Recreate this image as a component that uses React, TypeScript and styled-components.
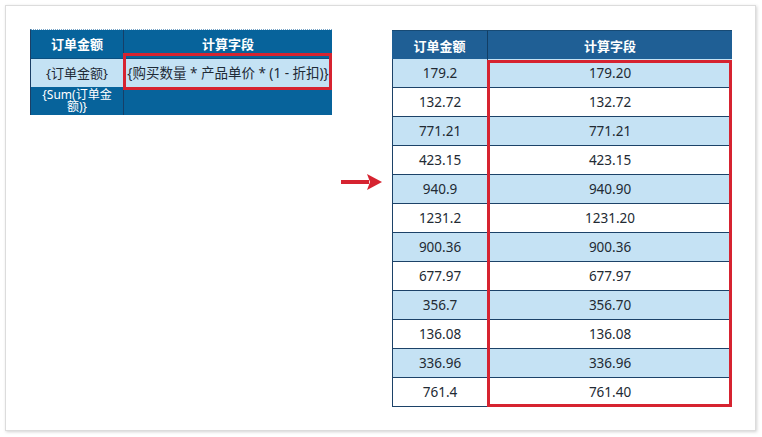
import React from "react";
import styled, { createGlobalStyle } from "styled-components";

const Global = createGlobalStyle`
  html, body { margin: 0; padding: 0; background: #ffffff; }
  body { font-family: "Noto Sans", "Noto Sans CJK SC", sans-serif; }
`;

const Page = styled.div`
  width: 762px;
  height: 437px;
  padding: 5px 0 0 5px;
  box-sizing: border-box;
`;

const Card = styled.div`
  width: 751px;
  height: 426px;
  box-sizing: border-box;
  border: 1px solid #dcdcdc;
  box-shadow: 1px 1px 3px rgba(0, 0, 0, 0.18);
  background: #ffffff;
  padding: 23px 0 0 24px;
  display: flex;
  align-items: flex-start;
`;

const Template = styled.div`
  position: relative;
  width: 302px;
  box-sizing: border-box;
  display: grid;
  grid-template-columns: 93px 1fr;
  grid-template-rows: 29px 28px 28px;
  border-top: 1px dotted #7aa6c8;
  border-left: 1px solid #1b3f66;
`;

const TCell = styled.div<{ $kind: "head" | "data" | "foot"; $divider?: boolean; $wide?: boolean }>`
  display: flex;
  align-items: center;
  justify-content: center;
  text-align: center;
  box-sizing: border-box;
  padding: ${(p) => (p.$wide ? "0" : "0 6px")};
  white-space: ${(p) => (p.$kind === "foot" ? "normal" : "nowrap")};
  overflow: hidden;
  border-right: ${(p) => (p.$divider ? "1px solid #163f68" : "none")};
  background: ${(p) => (p.$kind === "data" ? "#c4e2f4" : "#07639b")};
  color: ${(p) => (p.$kind === "data" ? "#1e2a36" : "#ffffff")};
  font-size: ${(p) => (p.$kind === "foot" ? "12px" : p.$wide ? "13.5px" : "13px")};
  line-height: ${(p) => (p.$kind === "foot" ? "12px" : "16px")};
  font-weight: ${(p) => (p.$kind === "head" ? 700 : 400)};
  border-bottom: ${(p) => (p.$kind === "head" ? "1px solid #0b4f80" : "none")};
`;

const Highlight = styled.div<{ $top: number; $left: number; $w: number; $h: number }>`
  position: absolute;
  top: ${(p) => p.$top}px;
  left: ${(p) => p.$left}px;
  width: ${(p) => p.$w}px;
  height: ${(p) => p.$h}px;
  box-sizing: border-box;
  border: 3px solid #d62330;
  pointer-events: none;
`;

const ArrowSlot = styled.div`
  width: 60px;
  height: 20px;
  margin-top: 143px;
  display: flex;
  align-items: center;
  padding-left: 9px;
  box-sizing: border-box;
`;

const Result = styled.div`
  position: relative;
  margin-top: 1px;
  width: 340px;
  display: grid;
  grid-template-columns: 95px 1fr;
  grid-auto-rows: 29px;
`;

const RHead = styled.div<{ $divider?: boolean }>`
  display: flex;
  align-items: center;
  justify-content: center;
  background: #1f5f95;
  color: #ffffff;
  font-weight: 700;
  font-size: 13px;
  box-sizing: border-box;
  border-top: 1px solid #174a74;
  border-left: ${(p) => (p.$divider ? "1px solid #123e64" : "none")};
`;

const RCell = styled.div<{ $alt: boolean }>`
  display: flex;
  align-items: center;
  justify-content: center;
  background: ${(p) => (p.$alt ? "#c5e2f4" : "#ffffff")};
  color: #222a33;
  font-size: 13.5px;
  box-sizing: border-box;
  border-bottom: 1px solid #1c4268;
  border-left: 1px solid #1c4268;
`;

const rows = [
  ["179.2", "179.20"],
  ["132.72", "132.72"],
  ["771.21", "771.21"],
  ["423.15", "423.15"],
  ["940.9", "940.90"],
  ["1231.2", "1231.20"],
  ["900.36", "900.36"],
  ["677.97", "677.97"],
  ["356.7", "356.70"],
  ["136.08", "136.08"],
  ["336.96", "336.96"],
  ["761.4", "761.40"],
];

export default function App() {
  return (
    <>
      <Global />
      <Page>
        <Card>
          <Template>
            <TCell $kind="head" $divider>订单金额</TCell>
            <TCell $kind="head">计算字段</TCell>
            <TCell $kind="data" $divider>{"{订单金额}"}</TCell>
            <TCell $kind="data" $wide>{"{购买数量 * 产品单价 * (1 - 折扣)}"}</TCell>
            <TCell $kind="foot" $divider>{"{Sum(订单金额)}"}</TCell>
            <TCell $kind="foot"></TCell>
            <Highlight $top={23} $left={92} $w={209} $h={37} />
          </Template>
          <ArrowSlot>
            <svg width="42" height="18" viewBox="0 0 42 18">
              <rect x="0" y="7" width="28" height="4" fill="#d62330" />
              <polygon points="26,1 41,9 26,17 29,9" fill="#d62330" />
            </svg>
          </ArrowSlot>
          <Result>
            <RHead>订单金额</RHead>
            <RHead $divider>计算字段</RHead>
            {rows.map((r, i) => (
              <React.Fragment key={i}>
                <RCell $alt={i % 2 === 0}>{r[0]}</RCell>
                <RCell $alt={i % 2 === 0}>{r[1]}</RCell>
              </React.Fragment>
            ))}
            <Highlight $top={30} $left={95} $w={245} $h={347} />
          </Result>
        </Card>
      </Page>
    </>
  );
}
